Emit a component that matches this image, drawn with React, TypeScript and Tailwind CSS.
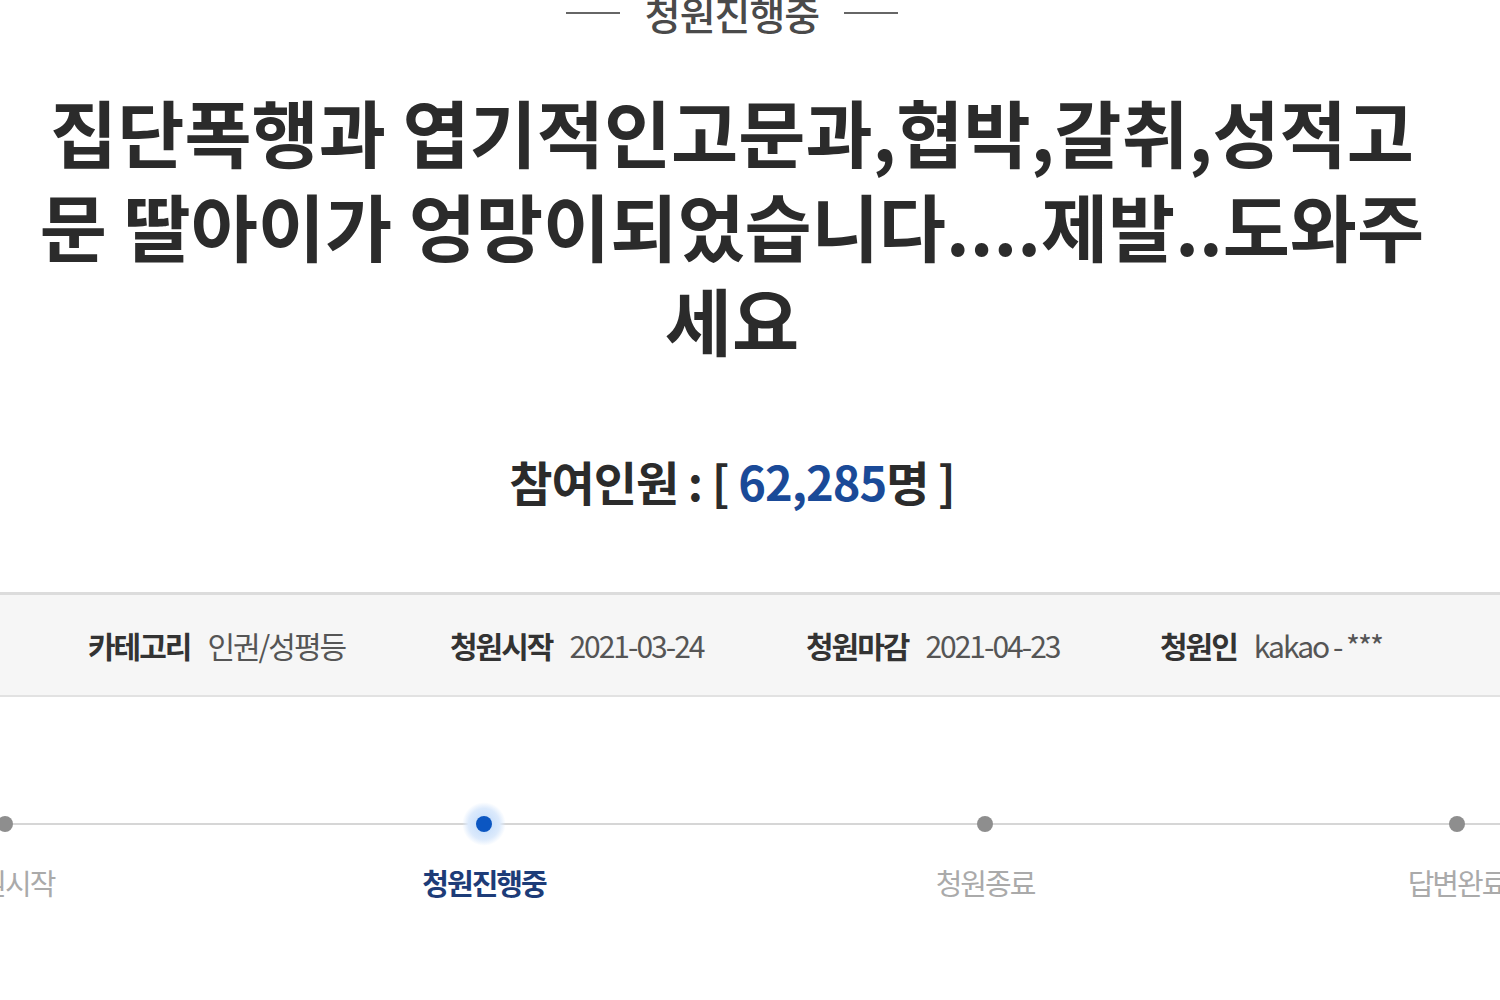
export default function App() {
  const info = [
    { label: "카테고리", value: "인권/성평등", width: "w-[362px]" },
    { label: "청원시작", value: "2021-03-24", width: "w-[356px]" },
    { label: "청원마감", value: "2021-04-23", width: "w-[354px]" },
    { label: "청원인", value: "kakao - ***", width: "w-[300px]" },
  ];

  return (
    <div
      className="min-h-[1000px] w-[1500px] overflow-hidden bg-white text-[#333]"
      style={{ fontFamily: '"Noto Sans CJK KR", "Noto Sans", sans-serif' }}
    >
      {/* status label */}
      <div className="mt-[-10px] flex h-[46px] items-center justify-center gap-[25px] pr-[36px]">
        <span className="h-[2px] w-[54px] bg-[#666]" />
        <span className="text-[39px] font-medium leading-[46px] tracking-[-1px] text-[#4a4a4a]">
          청원진행중
        </span>
        <span className="h-[2px] w-[54px] bg-[#666]" />
      </div>

      {/* title */}
      <h1 className="mt-[47px] pr-[36px] text-center text-[73px] font-bold leading-[94px] text-[#2b2b2b]">
        집단폭행과 엽기적인고문과,협박,갈취,성적고
        <br />
        문 딸아이가 엉망이되었습니다....제발..도와주
        <br />
        세요
      </h1>

      {/* participants */}
      <div className="mt-[86px] pr-[36px] text-center text-[47px] font-bold leading-[60px] tracking-[-1px] text-[#2b2b2b]">
        참여인원 : [ <span className="text-[#1a4a98]">62,285</span>명 ]
      </div>

      {/* info bar */}
      <div className="mt-[81px] flex h-[105px] items-center border-t-[3px] border-b-2 border-t-[#dcdcdc] border-b-[#e2e2e2] bg-[#f6f6f6] pl-[88px]">
        {info.map((item) => (
          <div key={item.label} className={`${item.width} flex shrink-0 items-baseline gap-[17px] text-[30px] tracking-[-2px]`}>
            <span className="font-bold text-[#333]">{item.label}</span>
            <span className="text-[#555]">{item.value}</span>
          </div>
        ))}
      </div>

      {/* progress steps */}
      <div className="relative mt-[111px]">
        <div className="absolute left-0 right-0 top-[15px] h-[2px] bg-[#d6d6d6]" />
        <div className="relative flex">
          <Step left="ml-[-95px]" label="청원시작" />
          <Step left="ml-[279px]" label="청원진행중" active />
          <Step left="ml-[301px]" label="청원종료" />
          <Step left="ml-[272px]" label="답변완료" />
        </div>
      </div>
    </div>
  );
}

function Step({ left, label, active }: { left: string; label: string; active?: boolean }) {
  return (
    <div className={`${left} flex w-[200px] shrink-0 flex-col items-center`}>
      <div className="flex h-[32px] w-[44px] items-center justify-center">
        {active ? (
          <div className="flex h-[44px] w-[44px] shrink-0 items-center justify-center rounded-full bg-[radial-gradient(circle,#bcd8fa_0%,#dceafc_50%,rgba(255,255,255,0)_70%)]">
            <div className="h-[16px] w-[16px] rounded-full bg-[#0b56c2]" />
          </div>
        ) : (
          <div className="h-[16px] w-[16px] rounded-full bg-[#8e8e8e]" />
        )}
      </div>
      <div
        className={
          active
            ? "mt-[24px] text-[29px] font-bold leading-[36px] tracking-[-2px] text-[#1d3c78]"
            : "mt-[24px] text-[29px] leading-[36px] tracking-[-2px] text-[#aaa]"
        }
      >
        {label}
      </div>
    </div>
  );
}
